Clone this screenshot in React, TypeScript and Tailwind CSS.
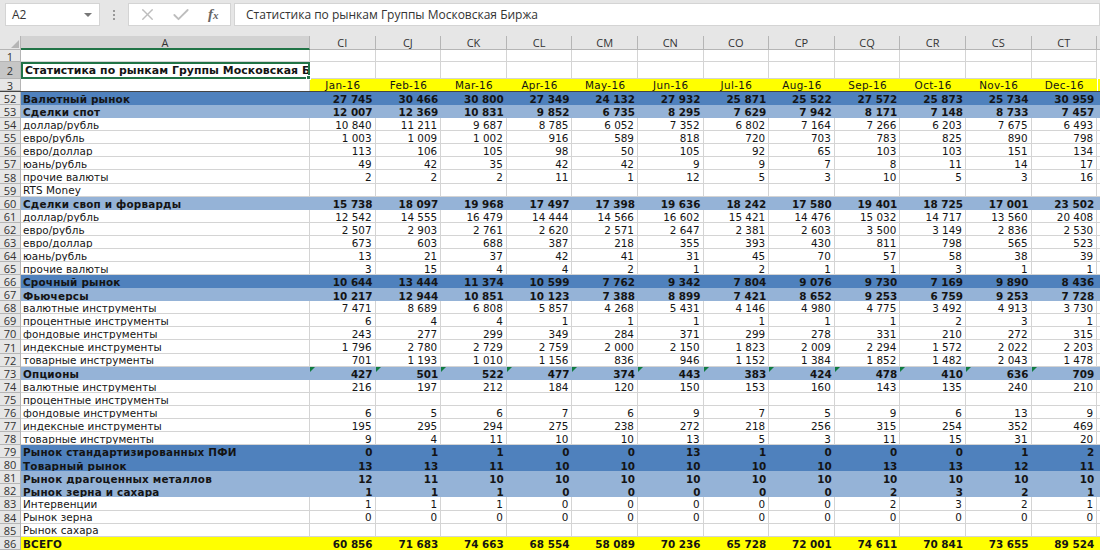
import { Check, X } from "lucide-react";

type Kind = "dark" | "light" | "total" | "plain";

const rows: [number, string, Kind, string][] = [
  [52, "Валютный рынок", "dark", "27 745,30 466,30 800,27 349,24 132,27 932,25 871,25 522,27 572,25 873,25 734,30 959"],
  [53, "Сделки спот", "light", "12 007,12 369,10 831,9 852,6 735,8 295,7 629,7 942,8 171,7 148,8 733,7 457"],
  [54, "доллар/рубль", "plain", "10 840,11 211,9 687,8 785,6 052,7 352,6 802,7 164,7 266,6 203,7 675,6 493"],
  [55, "евро/рубль", "plain", "1 003,1 009,1 002,916,589,818,720,703,783,825,890,798"],
  [56, "евро/доллар", "plain", "113,106,105,98,50,105,92,65,103,103,151,134"],
  [57, "юань/рубль", "plain", "49,42,35,42,42,9,9,7,8,11,14,17"],
  [58, "прочие валюты", "plain", "2,2,2,11,1,12,5,3,10,5,3,16"],
  [59, "RTS Money", "plain", ""],
  [60, "Сделки своп и форварды", "light", "15 738,18 097,19 968,17 497,17 398,19 636,18 242,17 580,19 401,18 725,17 001,23 502"],
  [61, "доллар/рубль", "plain", "12 542,14 555,16 479,14 444,14 566,16 602,15 421,14 476,15 032,14 717,13 560,20 408"],
  [62, "евро/рубль", "plain", "2 507,2 903,2 761,2 620,2 571,2 647,2 381,2 603,3 500,3 149,2 836,2 530"],
  [63, "евро/доллар", "plain", "673,603,688,387,218,355,393,430,811,798,565,523"],
  [64, "юань/рубль", "plain", "13,21,37,42,41,31,45,70,57,58,38,39"],
  [65, "прочие валюты", "plain", "3,15,4,4,2,1,2,1,1,3,1,1"],
  [66, "Срочный рынок", "dark", "10 644,13 444,11 374,10 599,7 762,9 342,7 804,9 076,9 730,7 169,9 890,8 436"],
  [67, "Фьючерсы", "light", "10 217,12 944,10 851,10 123,7 388,8 899,7 421,8 652,9 253,6 759,9 253,7 728"],
  [68, "валютные инструменты", "plain", "7 471,8 689,6 808,5 857,4 268,5 431,4 146,4 980,4 775,3 492,4 913,3 730"],
  [69, "процентные инструменты", "plain", "6,4,4,1,1,1,1,1,1,2,3,1"],
  [70, "фондовые инструменты", "plain", "243,277,299,349,284,371,299,278,331,210,272,315"],
  [71, "индексные инструменты", "plain", "1 796,2 780,2 729,2 759,2 000,2 150,1 823,2 009,2 294,1 572,2 022,2 203"],
  [72, "товарные инструменты", "plain", "701,1 193,1 010,1 156,836,946,1 152,1 384,1 852,1 482,2 043,1 478"],
  [73, "Опционы", "light", "427,501,522,477,374,443,383,424,478,410,636,709"],
  [74, "валютные инструменты", "plain", "216,197,212,184,120,150,153,160,143,135,240,210"],
  [75, "процентные инструменты", "plain", ""],
  [76, "фондовые инструменты", "plain", "6,5,6,7,6,9,7,5,9,6,13,9"],
  [77, "индексные инструменты", "plain", "195,295,294,275,238,272,218,256,315,254,352,469"],
  [78, "товарные инструменты", "plain", "9,4,11,10,10,13,5,3,11,15,31,20"],
  [79, "Рынок стандартизированных ПФИ", "dark", "0,1,1,0,0,13,1,0,0,0,1,2"],
  [80, "Товарный рынок", "dark", "13,13,11,10,10,10,10,10,13,13,12,11"],
  [81, "Рынок драгоценных металлов", "light", "12,11,10,10,10,10,10,10,10,10,10,10"],
  [82, "Рынок зерна и сахара", "light", "1,1,1,0,0,0,0,0,2,3,2,1"],
  [83, "Интервенции", "plain", "1,1,1,0,0,0,0,0,2,3,2,1"],
  [84, "Рынок зерна", "plain", "0,0,0,0,0,0,0,0,0,0,0,0"],
  [85, "Рынок сахара", "plain", ""],
  [86, "ВСЕГО", "total", "60 856,71 683,74 663,68 554,58 089,70 236,65 728,72 001,74 611,70 841,73 655,89 524"],
];

const columns = ["CI", "CJ", "CK", "CL", "CM", "CN", "CO", "CP", "CQ", "CR", "CS", "CT"];
const months = ["Jan-16", "Feb-16", "Mar-16", "Apr-16", "May-16", "Jun-16", "Jul-16", "Aug-16", "Sep-16", "Oct-16", "Nov-16", "Dec-16"];

const kindClass: Record<Kind, string> = {
  dark: "bg-[#4f81bd] font-bold",
  light: "bg-[#95b3d7] font-bold",
  total: "bg-[#ffff00] font-bold",
  plain: "bg-white",
};

function RowNum({ n, h, active }: { n: number; h: string; active?: boolean }) {
  return (
    <div
      className={`${h} flex w-[21px] shrink-0 items-center justify-center border-r border-b border-[#b5b5b5] pt-[1px] text-[11px] text-[#333] ${
        active ? "bg-[#c6c6c6]" : "bg-[#e6e6e6]"
      }`}
      style={{ fontFamily: '"Open Sans", sans-serif' }}
    >
      {n}
    </div>
  );
}

function Row({ n, label, kind, values }: { n: number; label: string; kind: Kind; values: string }) {
  const cells = values ? values.split(",") : Array(12).fill("");
  const line = kind === "plain" ? "border-r border-b border-[#d4d4d4]" : "";
  const spacing = kind === "plain" ? "tracking-[0.08px]" : "tracking-[0.2px]";
  return (
    <div className="flex h-[13.09px]">
      <RowNum n={n} h="h-[13.09px]" />
      <div className={`${kindClass[kind]} ${line} ${spacing} flex w-[289px] shrink-0 items-center overflow-hidden whitespace-nowrap pt-[2px] pl-[2px]`}>
        {label}
      </div>
      {cells.map((v: string, i: number) => (
        <div
          key={i}
          className={`${kindClass[kind]} ${line} relative flex w-[65.6px] shrink-0 items-center justify-end overflow-hidden whitespace-nowrap pt-[2px] pr-[3px]`}
        >
          {n === 73 && (
            <span className="absolute top-0 left-0 h-0 w-0 border-t-[5px] border-r-[5px] border-t-[#107c41] border-r-transparent" />
          )}
          {v}
        </div>
      ))}
      <div className={`${kindClass[kind]} ${line} w-[20px] shrink-0`} />
    </div>
  );
}

export default function App() {
  return (
    <div
      className="h-[550px] w-[1100px] overflow-hidden bg-white text-[10.4px] leading-none text-[#141414]"
      style={{ fontFamily: '"DejaVu Sans", sans-serif' }}
    >
      {/* formula bar */}
      <div className="flex h-[36px] items-start gap-[3px] bg-[#e6e6e6] pt-[3px] pl-[5px]">
        <div
          className="flex h-[23px] w-[95px] items-center justify-between border border-[#d4d4d4] bg-white pr-[7px] pl-[6px] text-[12px] text-[#333]"
          style={{ fontFamily: '"Open Sans", sans-serif' }}
        >
          A2
          <span className="h-0 w-0 border-x-[4px] border-t-[4px] border-x-transparent border-t-[#777]" />
        </div>
        <div className="flex w-[22px] flex-col items-center justify-center gap-[2px] self-stretch pb-[10px]">
          <span className="h-[2px] w-[2px] bg-[#999]" />
          <span className="h-[2px] w-[2px] bg-[#999]" />
          <span className="h-[2px] w-[2px] bg-[#999]" />
        </div>
        <div className="flex h-[23px] w-[103px] items-center border border-[#d4d4d4] bg-white pl-[9px]">
          <X size={19} strokeWidth={1.7} className="text-[#bdbdbd]" />
          <Check size={20} strokeWidth={2.2} className="ml-[14px] text-[#bdbdbd]" />
          <span className="ml-[17px] text-[15px] font-bold text-[#666] italic" style={{ fontFamily: '"Liberation Serif", serif' }}>
            f<span className="text-[11px]">x</span>
          </span>
        </div>
        <div
          className="flex h-[23px] flex-1 items-center border border-[#d4d4d4] bg-white pl-[11px] text-[12px] text-[#333]"
          style={{ fontFamily: '"Open Sans", sans-serif' }}
        >
          Статистика по рынкам Группы Московская Биржа
        </div>
      </div>

      {/* column headers */}
      <div className="flex h-[14px] text-[11px] text-[#333]" style={{ fontFamily: '"Open Sans", sans-serif' }}>
        <div className="relative w-[21px] shrink-0 border-r border-b border-[#b5b5b5] bg-[#e6e6e6]">
          <span className="absolute right-[1px] bottom-[1px] h-0 w-0 border-b-[8px] border-l-[8px] border-b-[#b5b5b5] border-l-transparent" />
        </div>
        <div className="flex w-[289px] shrink-0 items-center justify-center border-r border-b-2 border-r-[#b5b5b5] border-b-[#217346] bg-[#d2d2d2]">
          A
        </div>
        {columns.map((c) => (
          <div key={c} className="flex w-[65.6px] shrink-0 items-center justify-center border-r border-b border-[#b5b5b5] bg-[#e6e6e6]">
            {c}
          </div>
        ))}
        <div className="w-[20px] shrink-0 border-b border-[#b5b5b5] bg-[#e6e6e6]" />
      </div>

      {/* frozen top rows */}
      <div className="flex h-[12px]">
        <RowNum n={1} h="h-[12px]" />
        <div className="w-[289px] shrink-0 border-r border-b border-[#d4d4d4]" />
        {columns.map((c) => (
          <div key={c} className="w-[65.6px] shrink-0 border-r border-b border-[#d4d4d4]" />
        ))}
      </div>
      <div className="flex h-[17px]">
        <RowNum n={2} h="h-[17px]" active />
        <div className="relative flex w-[289px] shrink-0 items-center border-2 border-[#217346] pl-[2px] text-[10.9px] font-bold tracking-[0.05px]">
          <span className="block overflow-hidden whitespace-nowrap pt-[3px] pb-[1px]">Статистика по рынкам Группы Московская Биржа</span>
          <span className="absolute right-[-3px] bottom-[-3px] h-[5px] w-[5px] border border-white bg-[#217346]" />
        </div>
        {columns.map((c) => (
          <div key={c} className="w-[65.6px] shrink-0 border-r border-b border-[#d4d4d4]" />
        ))}
      </div>
      <div className="flex h-[13px] border-b border-[#444]">
        <RowNum n={3} h="h-[12px]" />
        <div className="w-[289px] shrink-0 border-r border-[#d4d4d4]" />
        {months.map((m) => (
          <div key={m} className="flex w-[65.6px] shrink-0 items-center justify-center bg-[#ffff00] pt-[1px] text-[10.4px] tracking-[0.35px]">
            {m}
          </div>
        ))}
        <div className="ml-[1px] w-[19px] shrink-0 bg-[#ffff00]" />
      </div>

      {rows.map(([n, label, kind, values]) => (
        <Row key={n} n={n} label={label} kind={kind} values={values} />
      ))}
    </div>
  );
}
